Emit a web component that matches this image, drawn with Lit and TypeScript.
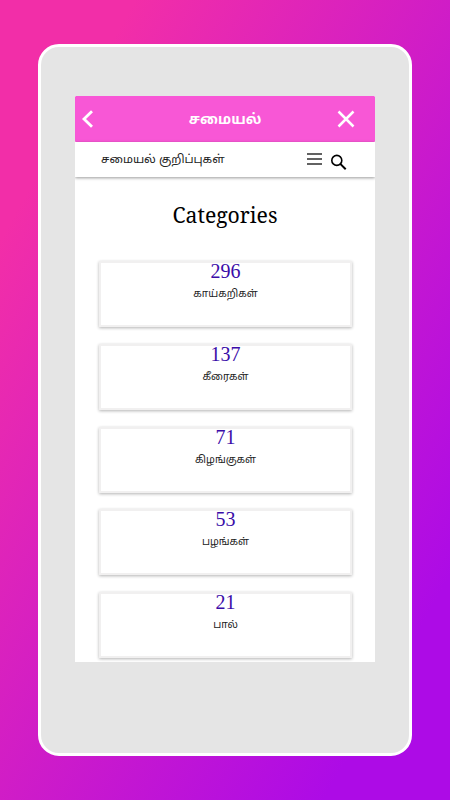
import { LitElement, html, css } from "lit";
import { customElement } from "lit/decorators.js";

const categories = [
  { count: 296, name: "காய்கறிகள்" },
  { count: 137, name: "கீரைகள்" },
  { count: 71, name: "கிழங்குகள்" },
  { count: 53, name: "பழங்கள்" },
  { count: 21, name: "பால்" },
];

@customElement("app-root")
export class AppRoot extends LitElement {
  static styles = css`
    :host {
      display: block;
      box-sizing: border-box;
      height: 800px;
      padding: 44px 38px;
      overflow: hidden;
      background: linear-gradient(to bottom right, #f22ea8 15%, #ad0be6 86%);
    }
    .tablet {
      box-sizing: border-box;
      height: 712px;
      padding: 49px 34px;
      border: 3px solid #fff;
      border-radius: 21px;
      background: #e5e5e5;
    }
    .screen {
      display: flex;
      flex-direction: column;
      height: 566px;
      overflow: hidden;
      border-radius: 1px 1px 0 0;
      background: #fff;
      color: #000;
      font-family: "Noto Sans Tamil", "Noto Sans", sans-serif;
    }
    .titlebar {
      display: grid;
      grid-template-columns: 32px 1fr 32px;
      align-items: center;
      flex: none;
      box-sizing: border-box;
      height: 46px;
      padding: 0 6px;
      background: #f857d6;
      border-radius: 1px;
      color: #fff;
    }
    .title {
      padding-top: 4px;
      text-align: center;
      font-size: 14px;
      line-height: 24px;
      font-weight: 700;
      white-space: nowrap;
    }
    .toolbar {
      display: flex;
      align-items: center;
      flex: none;
      box-sizing: border-box;
      height: 35px;
      padding: 0 28px 0 26px;
      box-shadow: 0 1px 3px rgba(0, 0, 0, 0.4);
    }
    .subtitle {
      flex: 1;
      padding-top: 1px;
      font-size: 11.65px;
      line-height: 20px;
      white-space: nowrap;
      color: #222;
    }
    .menu { margin: 0 8px 2px 0; }
    .search { margin-top: 5px; }
    svg { display: block; }
    .heading {
      flex: none;
      margin: 22px 0 30px;
      text-align: center;
      font: 400 21.2px/32px "Noto Serif", "DejaVu Serif Condensed", "DejaVu Serif", serif;
    }
    .list {
      display: flex;
      flex-direction: column;
      gap: 16.8px;
      padding: 0 23px 0 24px;
    }
    .card {
      box-sizing: border-box;
      flex: none;
      height: 66px;
      border: 2px solid #f1f0f0;
      box-shadow: 0 1px 3px rgba(0, 0, 0, 0.3);
      text-align: center;
    }
    .count {
      height: 22px;
      font: 20px/17px "Liberation Serif", serif;
      color: #3a0ca8;
    }
    .name {
      font-size: 10.3px;
      line-height: 20px;
      color: #222;
    }
  `;

  render() {
    return html`
      <main class="tablet">
        <div class="screen">
          <header class="titlebar">
            <svg width="13" height="18" viewBox="0 0 13 18" fill="none" stroke="#fff" stroke-width="2.8">
              <path d="M11 1.2 3 9l8 7.8" />
            </svg>
            <div class="title">சமையல்</div>
            <svg width="18" height="18" viewBox="0 0 18 18" fill="none" stroke="#fff" stroke-width="2.5">
              <path d="M1.5 1.5l15 15M16.5 1.5l-15 15" />
            </svg>
          </header>
          <nav class="toolbar">
            <div class="subtitle">சமையல் குறிப்புகள்</div>
            <svg class="menu" width="15" height="12" viewBox="0 0 15 12" stroke="#626262" stroke-width="1.9">
              <path d="M0 1h15M0 6h15M0 11h15" />
            </svg>
            <svg class="search" width="17" height="17" viewBox="0 0 17 17" fill="none" stroke="#000" stroke-width="1.6">
              <circle cx="6.8" cy="6.4" r="5" />
              <path d="M10.3 9.9l5.4 5.4" stroke-width="2" />
            </svg>
          </nav>
          <h1 class="heading">Categories</h1>
          <section class="list">
            ${categories.map(
              (c) => html`
                <article class="card">
                  <div class="count">${c.count}</div>
                  <div class="name">${c.name}</div>
                </article>
              `
            )}
          </section>
        </div>
      </main>
    `;
  }
}
